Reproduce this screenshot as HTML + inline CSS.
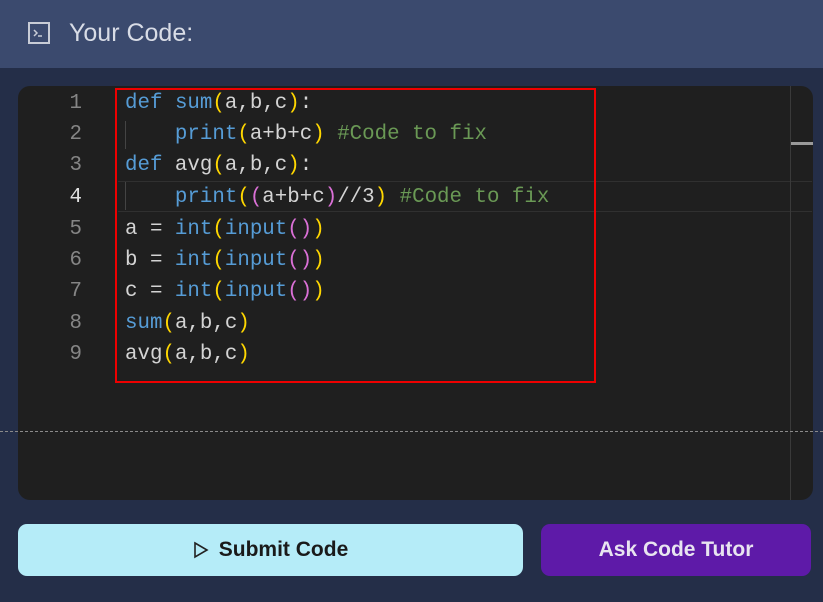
<!DOCTYPE html>
<html><head><style>
body{margin:0;width:823px;height:602px;background:#242e48;position:relative;overflow:hidden;font-family:"Liberation Sans",sans-serif}
.hdr{position:absolute;left:0;top:0;width:823px;height:68px;background:#3b4a6e}
.hdr .t{position:absolute;left:69px;top:19px;font-size:25px;color:#d8dce6}
.ico{position:absolute;left:28px;top:22px;width:22px;height:22px;border:2px solid #c8ccd6;box-sizing:border-box}
.ed{position:absolute;left:18px;top:86px;width:795px;height:414px;background:#1f1f1f;border-radius:12px;overflow:hidden}
.vl{position:absolute;left:772px;top:0;width:1px;height:414px;background:#3a3a3a}
.sb{position:absolute;left:773px;top:56px;width:22px;height:3px;background:#9a9a9a}
.cur{position:absolute;left:100px;top:95px;width:694px;height:29px;border-top:1px solid #303030;border-bottom:1px solid #303030}
.code{position:absolute;left:0;top:4px;font-family:"Liberation Mono",monospace;font-size:20.8px;white-space:pre}
.ln{position:absolute;width:64px;text-align:right;color:#858585}
.cl{position:absolute;left:107px;color:#d4d4d4}
.k{color:#569cd6}.f{color:#569cd6}.v{color:#e0e0e0}.y{color:#ffd700}.p{color:#da70d6}.c{color:#6a9955}
.g{position:absolute;left:107px;width:1px;background:#444}
.red{position:absolute;left:115px;top:88px;width:477px;height:291px;border:2.5px solid #ee0000}
.dash{position:absolute;left:0;top:431px;width:823px;border-top:1px dashed #8a8a8a}
.btn{position:absolute;top:524px;height:52px;border-radius:9px;font-weight:bold;font-size:21px;display:flex;align-items:center;justify-content:center}
</style></head><body>
<div class="hdr"><div class="ico"><svg width="18" height="18" style="position:absolute;left:0;top:0"><path d="M4 6l3 3-3 3M8 12h4" stroke="#c8ccd6" stroke-width="1.5" fill="none"/></svg></div><div class="t">Your Code:</div></div>
<div class="ed">
<div class="cur"></div>
<div class="g" style="top:35px;height:28px"></div>
<div class="g" style="top:96px;height:28px"></div>
<div class="code">
<div class="ln" style="top:2px">1</div><div class="cl" style="top:2px"><span class="k">def</span> <span class="f">sum</span><span class="y">(</span>a,b,c<span class="y">)</span>:</div>
<div class="ln" style="top:33px">2</div><div class="cl" style="top:33px">    <span class="f">print</span><span class="y">(</span>a+b+c<span class="y">)</span> <span class="c">#Code to fix</span></div>
<div class="ln" style="top:64px">3</div><div class="cl" style="top:64px"><span class="k">def</span> avg<span class="y">(</span>a,b,c<span class="y">)</span>:</div>
<div class="ln" style="top:96px;color:#e0e0e0">4</div><div class="cl" style="top:96px">    <span class="f">print</span><span class="y">(</span><span class="p">(</span>a+b+c<span class="p">)</span>//3<span class="y">)</span> <span class="c">#Code to fix</span></div>
<div class="ln" style="top:128px">5</div><div class="cl" style="top:128px">a = <span class="k">int</span><span class="y">(</span><span class="k">input</span><span class="p">()</span><span class="y">)</span></div>
<div class="ln" style="top:159px">6</div><div class="cl" style="top:159px">b = <span class="k">int</span><span class="y">(</span><span class="k">input</span><span class="p">()</span><span class="y">)</span></div>
<div class="ln" style="top:190px">7</div><div class="cl" style="top:190px">c = <span class="k">int</span><span class="y">(</span><span class="k">input</span><span class="p">()</span><span class="y">)</span></div>
<div class="ln" style="top:222px">8</div><div class="cl" style="top:222px"><span class="f">sum</span><span class="y">(</span>a,b,c<span class="y">)</span></div>
<div class="ln" style="top:253px">9</div><div class="cl" style="top:253px">avg<span class="y">(</span>a,b,c<span class="y">)</span></div>
</div>
<div class="vl"></div><div class="sb"></div>
</div>
<div class="red"></div>
<div class="dash"></div>
<div class="btn" style="left:18px;width:505px;background:#b5ecf8;color:#1a1a1a"><svg width="16" height="18" style="margin-right:10px"><path d="M2 2L14 9L2 16Z" fill="none" stroke="#222" stroke-width="1.6"/></svg>Submit Code</div>
<div class="btn" style="left:541px;width:270px;background:#5e1aa8;color:#e8e4f0">Ask Code Tutor</div>
</body></html>
